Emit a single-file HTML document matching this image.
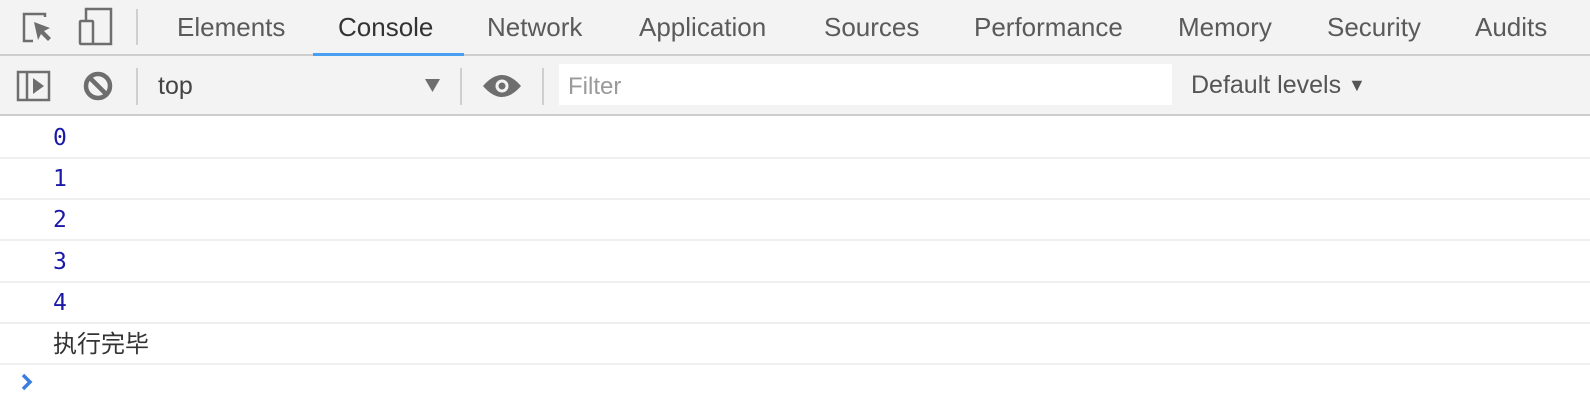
<!DOCTYPE html>
<html><head><meta charset="utf-8"><style>
body{margin:0;width:1590px;height:412px;background:#fff;position:relative;overflow:hidden;font-family:"Liberation Sans",sans-serif}
.a{position:absolute}
.tab{position:absolute;top:11px;font-size:26px;line-height:32px;color:#5a5a5a;white-space:nowrap}
.line{position:absolute;left:0;width:1590px;height:2px;background:#efefef}
.n{position:absolute;left:53px;font-family:"DejaVu Sans Mono","Liberation Mono",monospace;font-size:23px;line-height:24px;color:#1a1aa6}
</style></head><body>
<div class="a" style="left:0;top:0;width:1590px;height:54px;background:#f3f3f3;border-bottom:2px solid #cdcdcd"></div>
<div class="a" style="left:0;top:56px;width:1590px;height:58px;background:#f3f3f3;border-bottom:2px solid #cdcdcd"></div>
<svg class="a" style="left:0;top:0" width="560" height="114">
<g fill="none" stroke="#6e6e6e" stroke-width="2.5">
<path d="M45 17v-3H24v27h9"/>
<rect x="80" y="21" width="13" height="23" rx="1"/><path d="M86 21V9h25v35H93"/>
<rect x="18" y="72" width="31" height="28"/><path d="M27 72v28"/>
<circle cx="98" cy="86" r="12" stroke-width="4.5"/><path d="M90 78l16 16" stroke-width="4.5"/>
</g>
<path d="M34 22l16 6-6 3 7 7-3 3-7-7-3 6z" fill="#6e6e6e"/>
<path d="M33 78l11 8-11 8z" fill="#6e6e6e"/>
<g stroke="#cfcfcf" stroke-width="2"><path d="M137 9v36M137 68v37M461 68v37M543 68v37"/></g>
<path d="M425 79h15l-7.5 13z" fill="#6e6e6e"/>
<path d="M483 86q19-22 38 0q-19 22-38 0z" fill="#6e6e6e"/><circle cx="502" cy="86" r="6.5" fill="#f3f3f3"/><circle cx="502" cy="86" r="3.5" fill="#6e6e6e"/>
</svg>
<div class="tab" style="left:177px">Elements</div>
<div class="tab" style="left:338px;color:#333">Console</div>
<div class="tab" style="left:487px">Network</div>
<div class="tab" style="left:639px">Application</div>
<div class="tab" style="left:824px">Sources</div>
<div class="tab" style="left:974px">Performance</div>
<div class="tab" style="left:1178px">Memory</div>
<div class="tab" style="left:1327px">Security</div>
<div class="tab" style="left:1475px">Audits</div>
<div class="a" style="left:313px;top:53px;width:151px;height:3px;background:#4aa0f0"></div>
<div class="tab" style="left:158px;top:70px;color:#444;font-size:25px">top</div>
<div class="a" style="left:559px;top:64px;width:613px;height:41px;background:#fff"></div>
<div class="tab" style="left:568px;top:71px;color:#9a9a9a;font-size:24px">Filter</div>
<div class="tab" style="left:1191px;top:69px;color:#555;font-size:25px">Default levels <span style="font-size:18px;position:relative;top:-2px">▼</span></div>
<div class="line" style="top:157px"></div>
<div class="line" style="top:198px"></div>
<div class="line" style="top:239px"></div>
<div class="line" style="top:281px"></div>
<div class="line" style="top:322px"></div>
<div class="line" style="top:363px"></div>
<div class="n" style="top:126px">0</div>
<div class="n" style="top:167px">1</div>
<div class="n" style="top:208px">2</div>
<div class="n" style="top:250px">3</div>
<div class="n" style="top:291px">4</div>
<div class="a" style="left:53px;top:331px;font-size:24px;line-height:28px;color:#333;font-family:'Liberation Sans','Noto Sans CJK SC',sans-serif">执行完毕</div>
<svg class="a" style="left:18px;top:372px" width="20" height="20"><path d="M5 3l7 7-7 7" fill="none" stroke="#3b7de0" stroke-width="3.5"/></svg>
</body></html>
